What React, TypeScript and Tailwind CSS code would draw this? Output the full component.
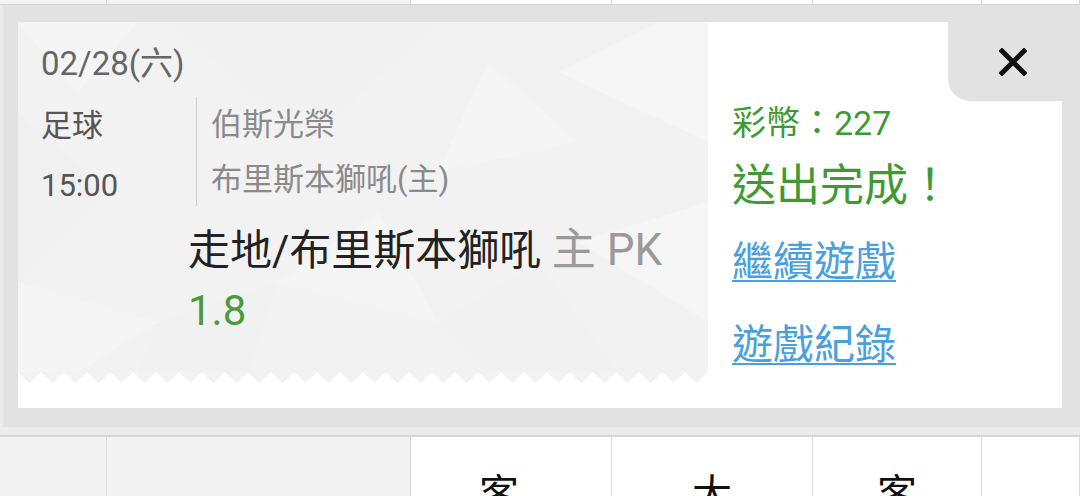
import React from "react";

const FONT = "font-[family-name:Roboto,'Noto_Sans_CJK_TC',sans-serif]";

// faint low-poly texture behind the ticket
function PolyTexture() {
  return (
    <svg className="pointer-events-none absolute inset-0 h-full w-full" viewBox="0 0 690 350" preserveAspectRatio="none" aria-hidden="true">
      <polygon points="0,0 120,0 60,70" fill="#ffffff" opacity="0.25" />
      <polygon points="150,0 420,0 290,120" fill="#ededed" opacity="0.3" />
      <polygon points="540,50 640,0 690,0 690,120" fill="#ffffff" opacity="0.35" />
      <polygon points="470,40 560,120 420,150" fill="#ffffff" opacity="0.25" />
      <polygon points="0,90 90,170 0,260" fill="#ededed" opacity="0.35" />
      <polygon points="0,260 140,300 60,350 0,350" fill="#ffffff" opacity="0.25" />
      <polygon points="260,260 360,190 420,300" fill="#ffffff" opacity="0.25" />
      <polygon points="420,300 520,240 600,350 470,350" fill="#ededed" opacity="0.3" />
      <polygon points="560,220 690,180 690,300" fill="#ffffff" opacity="0.3" />
      <polygon points="140,300 260,260 230,350 120,350" fill="#ededed" opacity="0.3" />
    </svg>
  );
}

// saw-tooth edge at the bottom of the ticket
function Zigzag() {
  const teeth = Array.from({ length: 30 }, (_, i) => i * 23);
  return (
    <svg width="690" height="11" viewBox="0 0 690 11" className="block" aria-hidden="true">
      {teeth.map((x) => (
        <polygon key={x} points={`${x},0 ${x + 23},0 ${x + 11.5},11`} fill="#f2f2f2" />
      ))}
    </svg>
  );
}

function TableRow({ className, labels }: { className: string; labels?: string[] }) {
  const cells = [
    { w: "w-[107px]", bg: "bg-[#f3f3f3]" },
    { w: "w-[304px]", bg: "bg-[#f3f3f3]" },
    { w: "w-[201px] pr-[24px]", bg: "bg-white" },
    { w: "w-[201px]", bg: "bg-white" },
    { w: "w-[169px]", bg: "bg-white" },
    { w: "flex-1", bg: "bg-white" },
  ];
  return (
    <div className={`flex ${className}`}>
      {cells.map((c, i) => (
        <div
          key={i}
          className={`${c.w} ${c.bg} border-r border-[#dadada] flex justify-center pt-[38px] text-[40px] leading-[40px] text-[#111]`}
        >
          {labels?.[i]}
        </div>
      ))}
    </div>
  );
}

export default function App() {
  return (
    <div className={`h-[496px] w-[1080px] overflow-hidden bg-white ${FONT}`}>
      {/* tail of the table row above */}
      <TableRow className="h-[5px] border-b border-[#d6d6d6] overflow-hidden" />

      {/* result panel */}
      <div className="border-l-[3px] border-[#ebebeb] bg-[#e2e2e2] pb-[19px] pl-[15px] pr-[18px] pt-[17px]">
        <div className="flex h-[386px] bg-white">
          {/* ticket */}
          <div className="flex w-[690px] flex-col">
            <div className="relative h-[350px] overflow-hidden bg-[#f2f2f2] pl-[23px] pt-[22px]">
              <PolyTexture />
              <div className="relative">
                <div className="text-[33px] leading-[40px] text-[#666]">02/28(六)</div>

                <div className="mt-[13px] flex">
                  <div className="w-[155px] pt-[9px] text-[31px] leading-[40px] text-[#555]">
                    <div>足球</div>
                    <div className="mt-[20px]">15:00</div>
                  </div>
                  <div className="border-l border-[#cfcfcf] pb-[2px] pl-[14px] pt-[8px] text-[31px] leading-[40px] text-[#8a8a8a]">
                    <div>伯斯光榮</div>
                    <div className="mt-[15px]">布里斯本獅吼(主)</div>
                  </div>
                </div>

                <div className="ml-[147px] mt-[19px] text-[42px] leading-[50px]">
                  <div className="text-[#222]">
                    走地/布里斯本獅吼 <span className="text-[44px] text-[#9a9a9a]">主 PK</span>
                  </div>
                  <div className="mt-[10px] text-[#4b9b3c]">1.8</div>
                </div>
              </div>
            </div>
            <Zigzag />
          </div>

          {/* status + actions */}
          <div className="flex flex-1 flex-col">
            <div className="flex h-[79px] justify-end">
              <button
                aria-label="Close"
                className="flex w-[114px] items-center justify-center rounded-bl-[22px] bg-[#e2e2e2] pl-[16px]"
              >
                <svg width="28" height="28" viewBox="0 0 28 28" aria-hidden="true">
                  <path d="M3 3L25 25M25 3L3 25" stroke="#111" strokeWidth="5" strokeLinecap="square" />
                </svg>
              </button>
            </div>
            <div className="pl-[24px]">
              <div className="mt-[2px] text-[34px] leading-[40px] text-[#3f9a34]">彩幣：227</div>
              <div className="mt-[19px] text-[44px] leading-[48px] text-[#3f9a34]">送出完成！</div>
              <a href="#" className="mt-[28px] block text-[41px] leading-[48px] text-[#4aa0de] underline decoration-2 underline-offset-[4px]">
                繼續遊戲
              </a>
              <a href="#" className="mt-[35px] block text-[41px] leading-[48px] text-[#4aa0de] underline decoration-2 underline-offset-[4px]">
                遊戲紀錄
              </a>
            </div>
          </div>
        </div>
      </div>

      <div className="h-[10px] border-b-2 border-[#d6d6d6] bg-[#ececec]" />

      {/* next table row */}
      <TableRow className="h-[60px]" labels={["", "", "客", "大", "客", ""]} />
    </div>
  );
}
